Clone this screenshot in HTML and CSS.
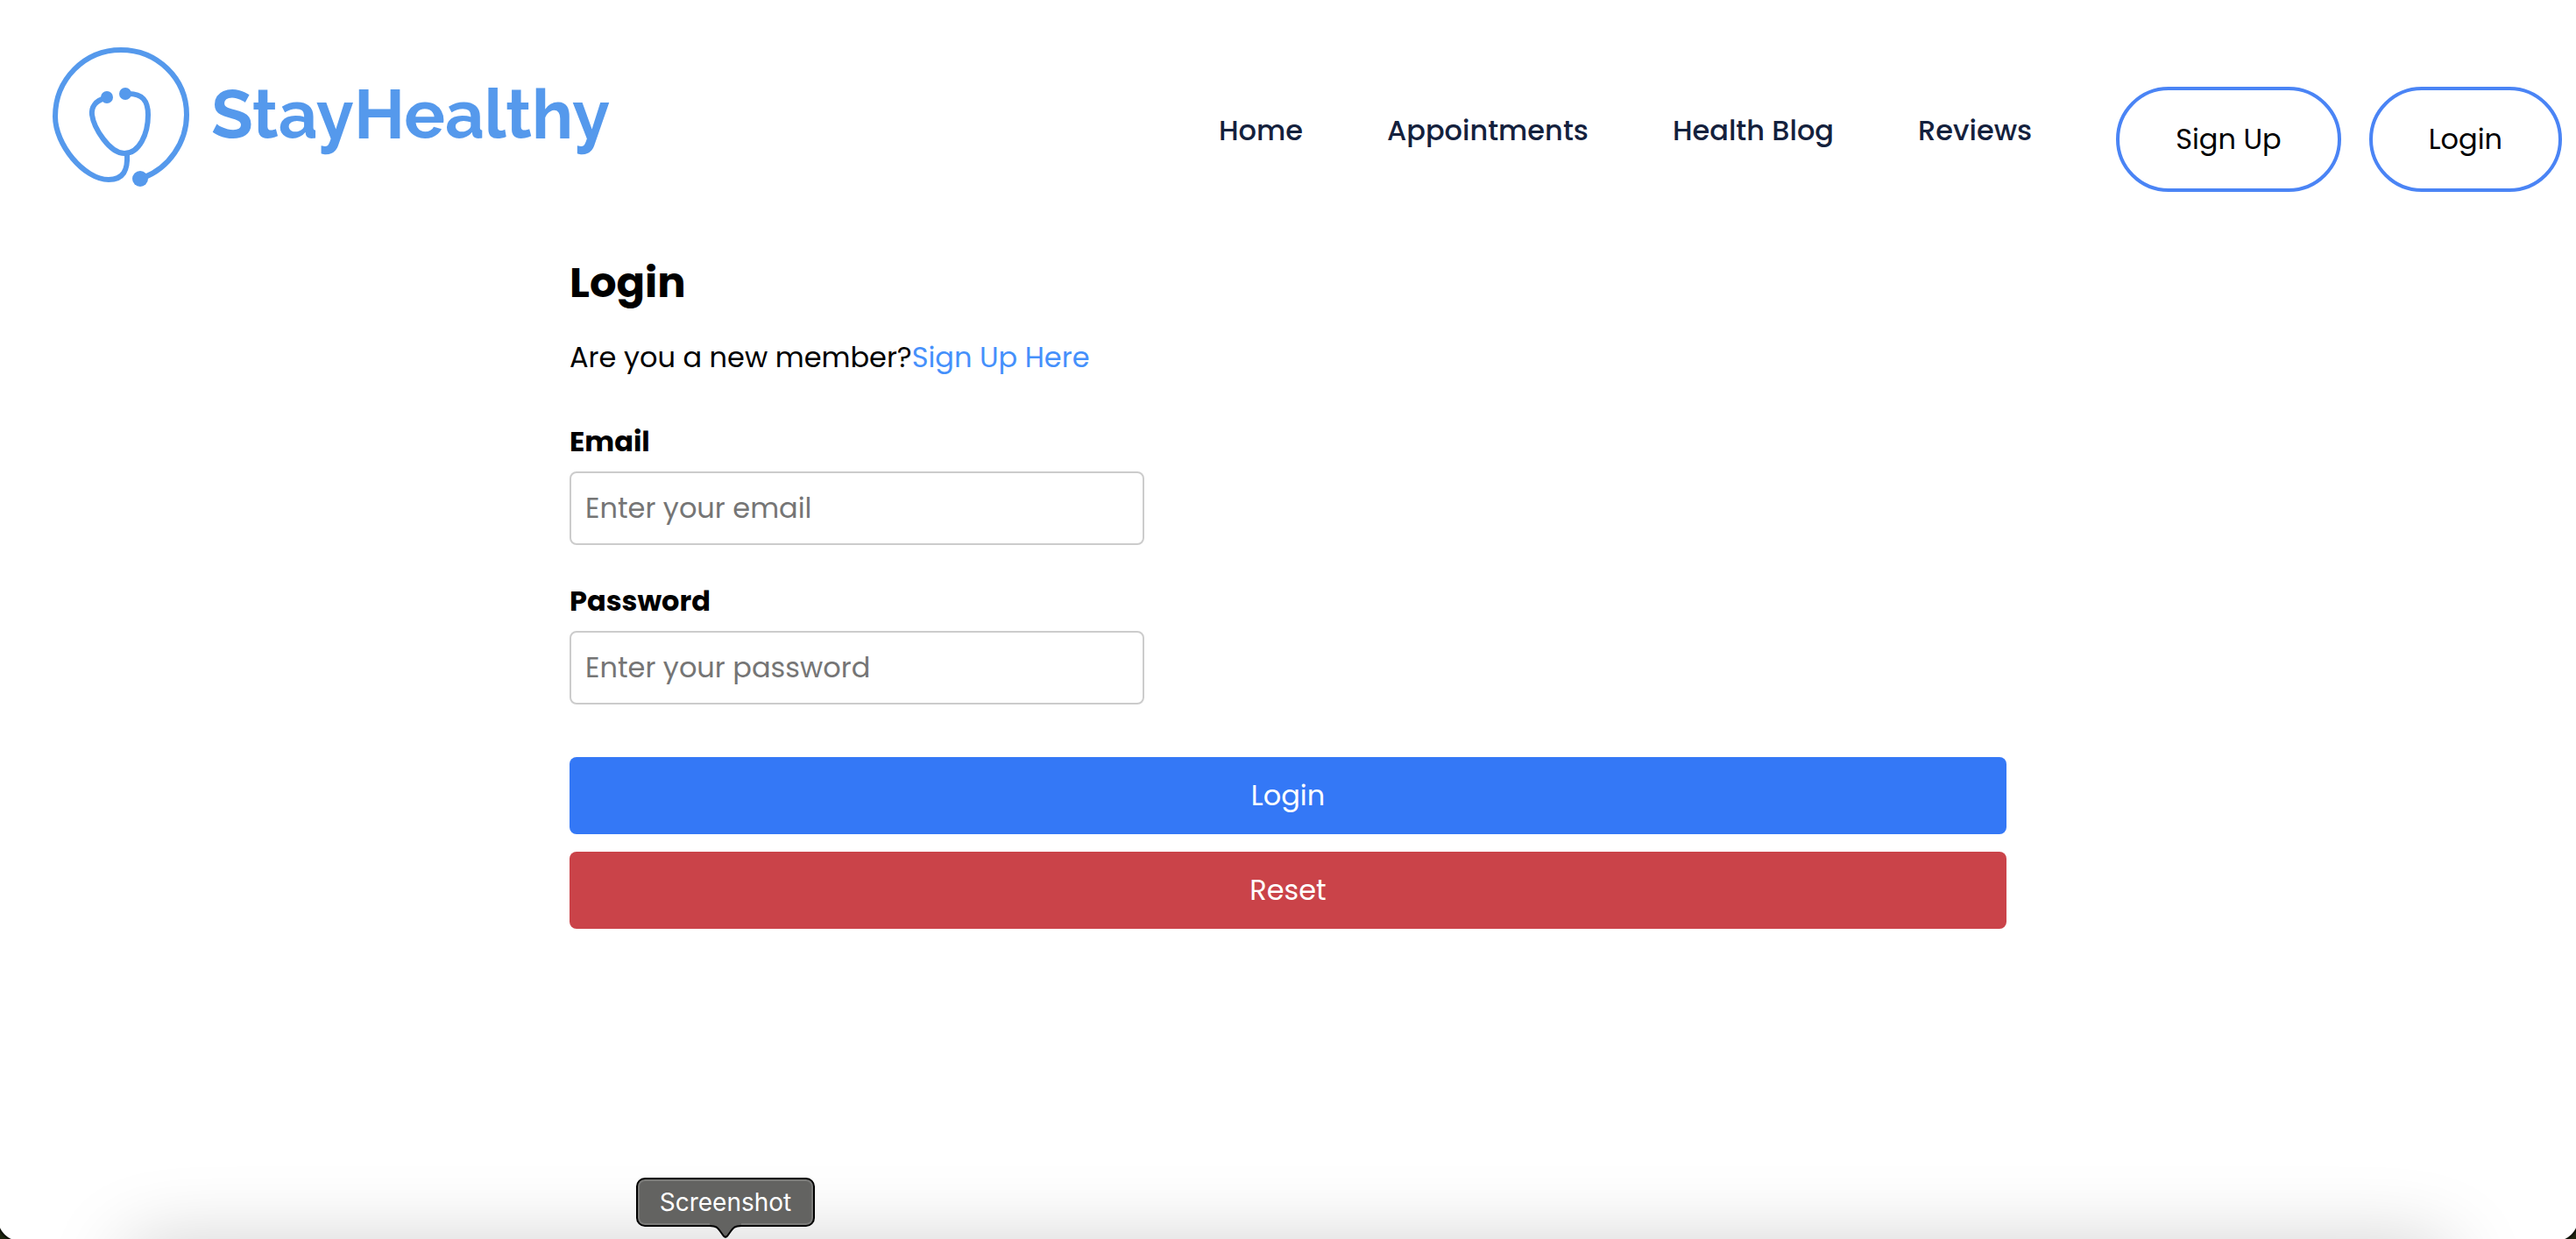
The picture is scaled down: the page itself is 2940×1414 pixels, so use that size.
FILE: index.html
```html
<!DOCTYPE html>
<html lang="en">
<head>
<meta charset="utf-8">
<meta name="viewport" content="width=device-width, initial-scale=1">
<title>StayHealthy</title>
<link rel="stylesheet" href="styles.css">
</head>
<body>
<header class="navbar">
  <a class="brand" href="#">
    <svg class="brand-icon" viewBox="0 0 160 164" fill="none" stroke-linecap="round" aria-hidden="true">
      <path d="M104 153C134 142 154 112 154 81C154 39 120 7 79 7C37 7 4 41 4 83C4 115 37 155 65 155C82 155 87 144 86 126" stroke-width="6"/>
      <path d="M61 62C50 65 45 72 46 81C48 96 66 125 83 125C100 125 110 103 110 81C110 64 103 57 88 57" stroke-width="6"/>
      <circle class="dot" cx="63" cy="61" r="7"/>
      <circle class="dot" cx="84" cy="57" r="7"/>
      <circle class="dot" cx="101" cy="154" r="9"/>
    </svg>
    <span class="brand-name">StayHealthy</span>
  </a>
  <nav class="nav-links">
    <a class="nav-link" href="#">Home</a>
    <a class="nav-link" href="#">Appointments</a>
    <a class="nav-link" href="#">Health Blog</a>
    <a class="nav-link" href="#">Reviews</a>
    <div class="nav-actions">
      <button class="pill" type="button">Sign Up</button>
      <button class="pill" type="button">Login</button>
    </div>
  </nav>
</header>
<main class="login">
  <h1 class="login-title">Login</h1>
  <p class="login-text">Are you a new member?<a class="login-link" href="#">Sign Up Here</a></p>
  <form class="login-form">
    <div class="field">
      <label class="field-label" for="email">Email</label>
      <input class="field-input" id="email" type="email" placeholder="Enter your email">
    </div>
    <div class="field">
      <label class="field-label" for="password">Password</label>
      <input class="field-input" id="password" type="password" placeholder="Enter your password">
    </div>
    <div class="form-actions">
      <button class="btn btn-primary" type="submit">Login</button>
      <button class="btn btn-danger" type="reset">Reset</button>
    </div>
  </form>
</main>
<div class="overlay">
  <div class="dock-shadow"></div>
  <div class="corner corner-left"></div>
  <div class="corner corner-right"></div>
  <div class="tooltip" role="tooltip">Screenshot
    <svg class="tooltip-arrow" viewBox="0 0 36 18" aria-hidden="true">
      <path class="arrow-fill" d="M0 0H36V4C28 4 27 6 18 18C9 6 8 4 0 4Z"/>
      <path class="arrow-line" d="M0 4C8 4 9 6 14 13C17 18 19 18 22 13C27 6 28 4 36 4"/>
    </svg>
  </div>
</div>
</body>
</html>
```
FILE: styles.css
```css
* {
  box-sizing: border-box;
}

html {
  height: 100%;
}

body {
  position: relative;
  min-height: 100%;
  margin: 0;
  background: #fff;
  color: #000;
  font: 400 32px/48px Poppins, Inter, sans-serif;
}

button,
input {
  font: inherit;
}

a {
  text-decoration: none;
}

.navbar {
  display: flex;
  justify-content: space-between;
  padding: 50px 16px 0 59px;
}

.brand {
  display: flex;
  gap: 22px;
  color: #5599ec;
}

.brand-icon {
  width: 160px;
  height: 164px;
  stroke: currentColor;
}

.dot {
  fill: currentColor;
  stroke: none;
}

.brand-name {
  padding-top: 33px;
  font: 700 78px/96px Raleway, Lato, sans-serif;
}

.nav-links {
  display: flex;
  align-items: flex-start;
  gap: 96px;
  padding-top: 49px;
}

.nav-link {
  padding-top: 26px;
  color: #14213d;
  font-weight: 500;
}

.nav-actions {
  display: flex;
  gap: 32px;
}

.pill {
  height: 120px;
  padding: 0 64px;
  border: 4px solid #4a84f5;
  border-radius: 60px;
  background: #fff;
  color: #000;
}

.login {
  max-width: 1640px;
  margin: 68px auto 0;
}

.login-title {
  margin: 0;
  font-size: 48px;
  font-weight: 700;
  line-height: 72px;
}

.login-text {
  margin: 25px 0 48px;
}

.login-link {
  color: #4590fb;
}

.field {
  display: flex;
  flex-direction: column;
  align-items: flex-start;
  gap: 10px;
  margin-bottom: 40px;
}

.field-label {
  font-weight: 700;
}

.field-input {
  width: 40%;
  height: 84px;
  padding: 0 16px;
  border: 2px solid #ccc;
  border-radius: 8px;
  background: #fff;
}

.field-input::placeholder {
  color: #757575;
}

.form-actions {
  display: flex;
  flex-direction: column;
  gap: 20px;
  margin-top: 60px;
}

.btn {
  height: 88px;
  border: 0;
  border-radius: 8px;
  color: #fff;
}

.btn-primary {
  background: #3478f6;
}

.btn-danger {
  background: #ca4349;
}

/* Strip along the bottom edge that holds the dock's shadow and its tooltip */
.overlay {
  position: absolute;
  right: 0;
  bottom: 0;
  left: 0;
  height: 160px;
  overflow: hidden;
  pointer-events: none;
}

.dock-shadow {
  position: absolute;
  right: 140px;
  bottom: -80px;
  left: 140px;
  height: 72px;
  border-radius: 36px;
  box-shadow: 0 0 90px rgba(0, 0, 0, 0.22);
}

.corner {
  position: absolute;
  bottom: 0;
  width: 20px;
  height: 20px;
}

.corner-left {
  left: 0;
  background: radial-gradient(circle at 24px -4px, transparent 26px, #0a0c04 27px, #1f2610 30px);
}

.corner-right {
  right: 0;
  background: radial-gradient(circle at -4px -4px, transparent 26px, #0a0c04 27px, #1f2610 30px);
}

.tooltip {
  position: absolute;
  bottom: 14px;
  left: 726px;
  width: 204px;
  height: 56px;
  border: 2px solid #000;
  border-radius: 10px;
  background: #636361;
  box-shadow: inset 0 0 0 2px #7b7b79;
  color: #fff;
  font: 400 28px/52px Inter, sans-serif;
  text-align: center;
}

.tooltip-arrow {
  position: absolute;
  top: 49px;
  left: 82px;
  width: 36px;
  height: 18px;
}

.arrow-fill {
  fill: #636361;
}

.arrow-line {
  fill: none;
  stroke: #000;
  stroke-width: 2;
}
```
